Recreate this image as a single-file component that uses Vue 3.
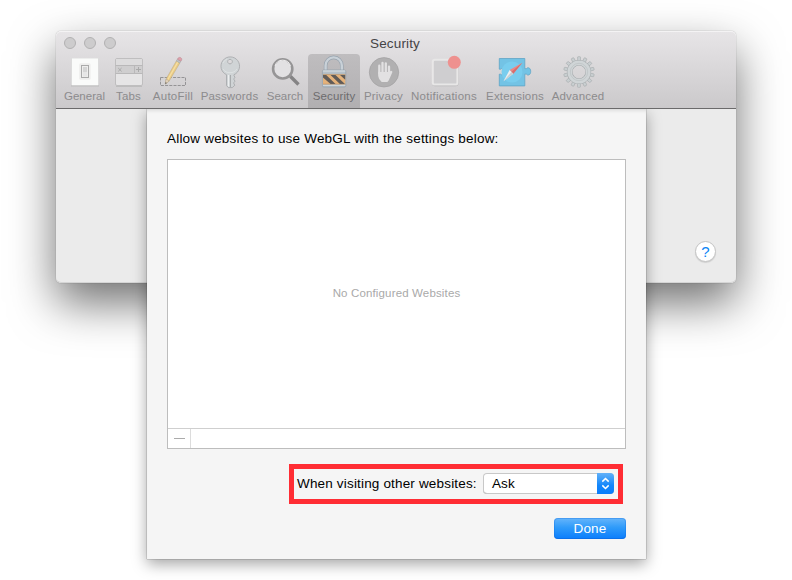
<script setup>
import { ref } from 'vue'

const tabs = [
  { name: 'General', x: 61, w: 47, ls: 0 },
  { name: 'Tabs', x: 108, w: 41, ls: 0.2 },
  { name: 'AutoFill', x: 149, w: 48, ls: 0.25 },
  { name: 'Passwords', x: 197, w: 65, ls: 0.15 },
  { name: 'Search', x: 262, w: 46, ls: 0 },
  { name: 'Security', x: 308, w: 52, ls: 0.15 },
  { name: 'Privacy', x: 360, w: 47, ls: 0.2 },
  { name: 'Notifications', x: 407, w: 74, ls: 0.25 },
  { name: 'Extensions', x: 481, w: 68, ls: 0.15 },
  { name: 'Advanced', x: 549, w: 58, ls: 0.2 },
]
const active = ref('Security')
const teeth = Array.from({ length: 14 }, (_, i) => (i * 360) / 14)
</script>

<template>
  <main class="desktop">
    <section class="window">
      <header class="toolbar">
        <div class="titlebar">
          <div class="lights"><i></i><i></i><i></i></div>
          <h1>Security</h1>
        </div>
        <nav class="tabs">
          <button
            v-for="t in tabs"
            :key="t.name"
            class="tab"
            :class="{ active: t.name === active }"
            :style="{ width: t.w + 'px' }"
            @click="active = t.name"
          >
            <svg class="icon" :width="t.w" height="36" :viewBox="`${t.x} 54 ${t.w} 36`">
              <g v-if="t.name === 'General'">
                <rect x="71" y="58.5" width="28" height="28" fill="#bebdbe" />
                <rect x="71.5" y="58.3" width="27" height="27" fill="#fafbfa" />
                <rect x="79.2" y="63.2" width="11.4" height="16.6" rx="1.5" fill="#eeeeed" />
                <rect x="81.5" y="65.5" width="7" height="12" fill="#eeeeed" stroke="#aaa" />
                <rect x="83" y="67" width="4" height="5" fill="#d5d5d5" />
                <rect x="83" y="72" width="4" height="4.5" fill="#e6e6e6" />
              </g>
              <g v-else-if="t.name === 'Tabs'">
                <rect x="115.5" y="58.5" width="27" height="27" rx="1.5" fill="#e6e5e6" stroke="#bfbebf" />
                <rect x="116" y="59" width="26" height="6" fill="#dddcdd" />
                <rect x="116" y="65" width="26" height="9" fill="#cfcecf" />
                <path d="M115.5 65.5h27M115.5 73.5h27M134.5 65.5v8" stroke="#b9b8b9" />
                <path d="m118.2 68 3.4 3.4m0-3.4-3.4 3.4M136 69.5h5M138.5 67v5" stroke="#aaa" fill="none" />
                <path d="M116 86.5h26" stroke="#b5b4b5" stroke-width=".7" />
              </g>
              <g v-else-if="t.name === 'AutoFill'">
                <rect x="160.5" y="77.5" width="25" height="8" fill="none" stroke="#949395" stroke-dasharray="3 1.2" />
                <path d="m165.3 84 .8-5 10.2-18 3.6 2-10.7 18z" fill="#eacb83" stroke="#b9a987" stroke-width=".5" />
                <path d="m167.8 79.5 10-17.4" stroke="#f6dfa5" stroke-width="1.2" />
                <path d="m165.3 84 .8-5 3.1 2z" fill="#e8d6bd" stroke="#a79a88" stroke-width=".5" />
                <path d="m165.2 84.2.4-2.2 1.3.9z" fill="#666" />
                <path d="m176.3 61 1.1-1.8 3.5 2-1 1.8z" fill="#bfc3c5" stroke="#96999b" stroke-width=".4" />
                <path d="m177.4 59.2.7-1.1q1.2-1.3 2.7-.4 1.6 1 .9 2.4l-.8 1.1z" fill="#dfa0ab" stroke="#b68891" stroke-width=".5" />
              </g>
              <g v-else-if="t.name === 'Passwords'">
                <path
                  fill-rule="evenodd"
                  d="M226.5 74.7a9.3 9.3 0 1 1 7.5 0v1.1l1 1.4-1 1.5v1.1l1.1 1.3-1.2 1.5v1.3l1 1.2-2.6 2.5h-3.9l-1.9-2zM230 59.3a2.3 2.3 0 1 0 .01 0z"
                  fill="#d0d4d6"
                  stroke="#a3a6a8"
                  stroke-width=".8"
                />
                <path d="M223 63a7.8 7.8 0 0 1 4-4M223 69c3 5 11 5 14 0" fill="none" stroke="#dee2e3" />
                <path d="M228.5 75v11.5" stroke="#eceeef" />
                <path d="M230.5 75v12" stroke="#a9acae" />
              </g>
              <g v-else-if="t.name === 'Search'">
                <path d="m290.3 76.3 8.2 8.2" stroke="#858485" stroke-width="3.4" />
                <circle cx="282.7" cy="68.9" r="9.6" fill="#e2e1e3" stroke="#969596" stroke-width="2.6" />
                <path d="M275 66a8 8 0 0 1 15.4 0" fill="none" stroke="#f0eff0" />
              </g>
              <g v-else-if="t.name === 'Security'">
                <path d="M325.6 70.5v-5a8.1 8.1 0 0 1 16.2 0v5" fill="none" stroke="#97a3ae" stroke-width="3.6" />
                <path d="M325.6 70.5v-5a8.1 8.1 0 0 1 16.2 0v5" fill="none" stroke="#c9d1d8" stroke-width="2.4" />
                <rect x="322.4" y="70" width="23.4" height="17" rx="1.5" fill="#b5c0c9" stroke="#93a0ac" stroke-width=".7" />
                <path d="M323 71h22.2M323 85.2h22.2" stroke="#dae0e4" />
                <rect x="323" y="74.4" width="22.3" height="9.8" fill="#e5b27a" />
                <path d="M323 75h3.2l9.3 8.9h-5L323 77.5zM330.5 75h5l9.4 8.9h-5zM340 75h5.2v4.8z" fill="#605b58" />
                <path d="M323 74.4h22.3M323 84.2h22.3" stroke="#a98560" stroke-width=".5" />
              </g>
              <g v-else-if="t.name === 'Privacy'">
                <circle cx="384" cy="72.3" r="14.7" fill="#b1b0b1" stroke="#a2a1a2" stroke-width=".7" />
                <g stroke="#e2e1e2" stroke-width="2.3" stroke-linecap="round" fill="none">
                  <path d="M379.3 73.5v-7.8M382.5 72v-9M385.8 72v-8.7M389 73v-6.3M389 77l2.2-5" />
                </g>
                <path d="M378.2 72h12l-.2 5.3q-.8 3.3-2.6 4.7h-5.7q-3.2-2.4-3.5-6z" fill="#e2e1e2" />
              </g>
              <g v-else-if="t.name === 'Notifications'">
                <rect x="432" y="60" width="26.5" height="26.3" rx="3" fill="#b8b7b9" />
                <rect x="432.8" y="59.8" width="24.6" height="24.8" rx="2.2" fill="#cfced0" stroke="#e8e7e7" stroke-width="2" />
                <circle cx="454.3" cy="62.3" r="6.5" fill="#ee918f" />
              </g>
              <g v-else-if="t.name === 'Extensions'">
                <path
                  d="M499.3 58.5h25.5v10.2h1.7c.6-1.6 4.2-1.5 4.2 2.7s-3.6 4.3-4.2 2.7h-1.7v11.8h-25.5V74.2h1.4c.7 1.2 3.8.8 3.8-2.5s-3.1-3.7-3.8-2.5h-1.4z"
                  fill="#73c3e5"
                  stroke="#61a5c5"
                  stroke-width=".8"
                />
                <circle cx="512" cy="72" r="10.5" fill="#79cdee" />
                <path d="m522.3 62.7-12.7 7.2 3.7 3.8z" fill="#ec8986" />
                <path d="m503.5 81.2 6.1-11.3 3.7 3.8z" fill="#eeeff0" />
                <path d="m522.3 62.7-9 11-1.8-1.9z" fill="#d96d6c" />
                <path d="m503.5 81.2 9.8-7.5-1.8-1.9z" fill="#c6cfd3" />
              </g>
              <g v-else>
                <rect
                  v-for="a in teeth"
                  :key="a"
                  x="577.6"
                  y="56.7"
                  width="2.9"
                  height="5"
                  rx=".6"
                  fill="#c9cfd1"
                  stroke="#a6abad"
                  stroke-width=".6"
                  :transform="`rotate(${a} 579 72)`"
                />
                <circle cx="579" cy="72" r="9.3" fill="none" stroke="#a6abad" stroke-width="5.6" />
                <circle cx="579" cy="72" r="9.3" fill="none" stroke="#d0d5d7" stroke-width="4.6" />
                <circle cx="579" cy="72" r="8.7" fill="none" stroke="#bcc1c3" stroke-width=".7" />
              </g>
            </svg>
            <span :style="{ letterSpacing: t.ls + 'px' }">{{ t.name }}</span>
          </button>
        </nav>
      </header>

      <div class="pane">
        <button class="help" aria-label="Help">?</button>
        <div class="sheet">
          <p class="prompt">Allow websites to use WebGL with the settings below:</p>
          <div class="list">
            <div class="empty">No Configured Websites</div>
            <div class="list-footer"><button class="remove" aria-label="Remove"><i></i></button></div>
          </div>
          <div class="default-row">
            <label>When visiting other websites:</label>
            <div class="select">
              <span>Ask</span>
              <div class="stepper">
                <svg width="17" height="21" viewBox="0 0 17 21">
                  <path d="m5.3 8.6 3.2-3.1 3.2 3.1M5.3 12.4l3.2 3.1 3.2-3.1" fill="none" stroke="#fff" stroke-width="1.5" />
                </svg>
              </div>
            </div>
          </div>
          <button class="done">Done</button>
        </div>
      </div>
    </section>
  </main>
</template>

<style>
body {
  margin: 0;
  background: #fff;
}
</style>

<style scoped>
* {
  box-sizing: border-box;
}
button {
  border: 0;
  padding: 0;
  background: none;
  font: inherit;
  color: inherit;
}
.desktop {
  width: 792px;
  height: 580px;
  overflow: hidden;
  padding: 31px 56px 0;
  font-family: 'Liberation Sans', Arial, sans-serif;
  font-size: 13.5px;
  color: #000;
}
.window {
  width: 680px;
  height: 252px;
  border-radius: 5px;
  display: flex;
  flex-direction: column;
  box-shadow: 0 0 1px rgba(0, 0, 0, 0.5), 0 20px 46px rgba(0, 0, 0, 0.56);
}
.toolbar {
  position: relative;
  z-index: 2;
  height: 78px;
  border-radius: 5px 5px 0 0;
  border-bottom: 1px solid #6b6a6b;
  background: linear-gradient(#e7e5e7, #cbc9cb);
  box-shadow: inset 0 1px 0 #f4f3f4;
}
.titlebar {
  height: 23px;
  display: grid;
  grid-template-columns: 1fr auto 1fr;
  align-items: center;
}
.lights {
  display: flex;
  gap: 8px;
  padding: 1px 0 0 8px;
}
.lights i {
  width: 12px;
  height: 12px;
  border-radius: 50%;
  background: #cdcccd;
  border: 1px solid #b2b1b2;
}
h1 {
  margin: 2px 2px 0 0;
  font-size: 13.5px;
  line-height: 16px;
  font-weight: 400;
  letter-spacing: 0.15px;
  color: #454446;
}
.tabs {
  display: flex;
  padding-left: 5px;
}
.tab {
  height: 54px;
  display: flex;
  flex-direction: column;
  align-items: center;
  font-size: 11.5px;
  line-height: 13px;
  color: #8c8b8d;
  white-space: nowrap;
  border-radius: 4px 4px 0 0;
}
.tab.active {
  background: linear-gradient(#bfbdbf, #b1afb1);
  color: #6d6c6e;
}
.icon {
  display: block;
  flex: none;
}
.pane {
  position: relative;
  flex: 1;
  display: flex;
  justify-content: flex-end;
  align-items: flex-end;
  padding: 0 20px 21px 0;
  background: #ebebeb;
  border-radius: 0 0 5px 5px;
  box-shadow: inset 0 -1px 0 #d5d5d5;
}
.help {
  width: 21px;
  height: 21px;
  border-radius: 50%;
  background: #fff;
  border: 1px solid #c4c4c4;
  box-shadow: 0 1px 1px rgba(0, 0, 0, 0.12);
  color: #0a84f5;
  font-size: 15px;
  line-height: 19px;
  text-align: center;
}
.sheet {
  position: absolute;
  top: 0;
  left: 91px;
  width: 499px;
  height: 450px;
  padding: 21px 20px 0;
  display: flex;
  flex-direction: column;
  background: #f5f5f5;
  box-shadow: inset 0 4px 4px -3px rgba(0, 0, 0, 0.14), 0 0 1px rgba(0, 0, 0, 0.65), 0 5px 14px rgba(0, 0, 0, 0.36);
}
.prompt {
  margin: 0;
  line-height: 18px;
  letter-spacing: 0.2px;
  white-space: nowrap;
}
.list {
  margin-top: 11px;
  height: 290px;
  border: 1px solid #bdbdbd;
  background: #fff;
  display: flex;
  flex-direction: column;
}
.empty {
  flex: 1;
  display: flex;
  align-items: center;
  justify-content: center;
  padding-bottom: 2px;
  font-size: 11.5px;
  letter-spacing: 0.15px;
  color: #a9a9a9;
}
.list-footer {
  height: 20px;
  border-top: 1px solid #cfcfcf;
  display: flex;
}
.remove {
  width: 23px;
  border-right: 1px solid #dcdcdc;
  display: flex;
  align-items: center;
  justify-content: center;
}
.remove i {
  width: 11px;
  height: 1px;
  background: #ababab;
}
.default-row {
  align-self: flex-end;
  margin: 15px 3px 0 0;
  width: 334px;
  height: 40px;
  border: 5px solid #ff2d34;
  display: flex;
  align-items: center;
  justify-content: space-between;
  padding: 0 4px 2px 3px;
}
.default-row label {
  letter-spacing: 0.17px;
  white-space: nowrap;
}
.select {
  width: 131px;
  height: 21px;
  display: flex;
  justify-content: space-between;
  align-items: center;
  background: #fff;
  border-radius: 4px;
  overflow: hidden;
  box-shadow: inset 0 0 0 1px #c8c8c8, inset 0 -1px 0 #b0b0b0;
}
.select span {
  padding-left: 9px;
  letter-spacing: 0.1px;
}
.stepper {
  width: 17px;
  height: 21px;
  background: linear-gradient(#62b1f8, #1286fb 60%, #0a7cfb);
}
.stepper svg {
  display: block;
}
.done {
  align-self: flex-end;
  margin-top: 14px;
  width: 72px;
  height: 21px;
  border-radius: 4px;
  background: linear-gradient(#66b5fb, #2f9bfa 45%, #0a7dfc);
  box-shadow: inset 0 0 0 1px rgba(18, 112, 225, 0.35), inset 0 -1px 0 rgba(0, 80, 210, 0.3);
  color: #fff;
  line-height: 21px;
  letter-spacing: 0.2px;
  text-align: center;
}
</style>
